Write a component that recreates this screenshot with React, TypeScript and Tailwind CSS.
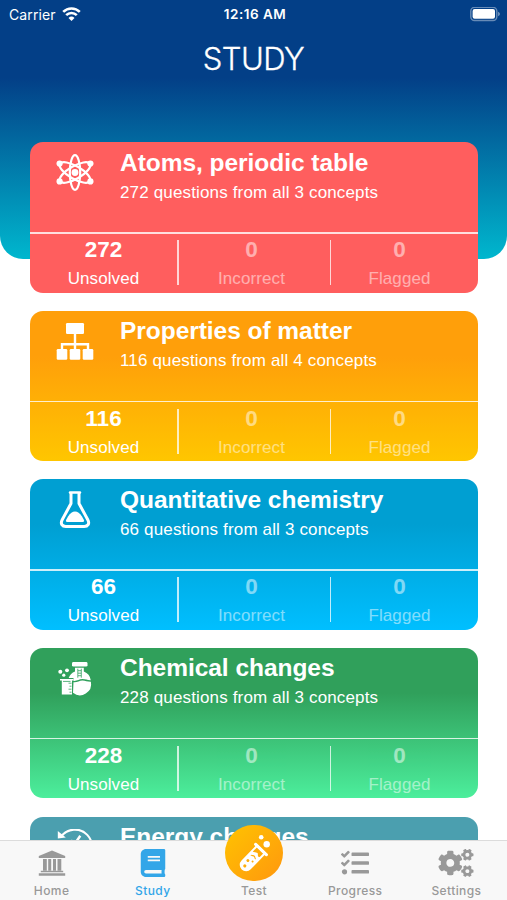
import React from 'react';
import { FaBook, FaCogs, FaTasks } from 'react-icons/fa';

interface Topic {
  title: string;
  questions?: number;
  concepts?: number;
  icon: React.ElementType;
  bgClass: string;
}

interface Tab {
  label: string;
  icon: React.ElementType;
  iconClass: string;
}

const AtomIcon: React.FC = () => (
  <svg width="38" height="38" viewBox="0 0 38 38" fill="none" stroke="currentColor" strokeWidth="2.2">
    <ellipse cx="19" cy="18.5" rx="5.2" ry="17.3" />
    <ellipse cx="19" cy="18.5" rx="6.4" ry="17.3" transform="rotate(60 19 18.5)" />
    <ellipse cx="19" cy="18.5" rx="6.4" ry="17.3" transform="rotate(-60 19 18.5)" />
    <g fill="currentColor" stroke="none">
      <circle cx="19" cy="18.5" r="3.4" />
      <circle cx="3.6" cy="9.6" r="3.1" />
      <circle cx="34.4" cy="9.6" r="3.1" />
      <circle cx="3.6" cy="27.4" r="3.1" />
      <circle cx="34.4" cy="27.4" r="3.1" />
    </g>
  </svg>
);

const SitemapIcon: React.FC = () => (
  <svg width="38" height="38" viewBox="0 0 38 38" fill="currentColor">
    <rect x="10" y="0" width="18" height="11" rx="1.3" />
    <rect x=".7" y="26" width="10.6" height="10.8" rx="1.3" />
    <rect x="13.7" y="26" width="10.6" height="10.8" rx="1.3" />
    <rect x="26.7" y="26" width="10.6" height="10.8" rx="1.3" />
    <path d="M6 26.5v-5.3h26v5.3M19 10.5v16" fill="none" stroke="currentColor" strokeWidth="2.4" />
  </svg>
);

const FlaskIcon: React.FC = () => (
  <svg width="38" height="38" viewBox="0 0 38 38" fill="none" stroke="currentColor" strokeLinejoin="round">
    <path d="M14 1.5h10" strokeWidth="2.4" strokeLinecap="round" />
    <path
      d="M15 2v10.5L6.200 28.800c-2.100 3.900 0 6.700 3.600 6.700h18.400c3.600 0 5.700-2.800 3.600-6.700L23 12.500V2"
      strokeWidth="3"
    />
    <path
      d="M12.200 25.300c2-3.200 4.200-4.800 6.800-4.800s4.800 1.600 6.800 4.800l2 3.500c.7 1.400.2 2.200-1.100 2.200H11.300c-1.300 0-1.800-.8-1.100-2.200z"
      fill="currentColor"
      stroke="none"
    />
  </svg>
);

const BeakersIcon: React.FC = () => (
  <svg width="38" height="38" viewBox="0 0 38 38" fill="currentColor">
    <rect x="16" y="2" width="15.5" height="4.6" rx="1.4" />
    <path d="M19 7.700h8.800v3.900a11.200 11.200 0 0 1 7 8.700c-3.200.2-5.200-1.200-8.300-1.200-3.600 0-5.500 2.200-9 1.800v-2.900h-4.800a11 11 0 0 1 6.300-6.400z" />
    <path d="M17.500 22.300c3.800.4 5.600-1.800 9-1.800 3 0 5 1.400 8.400 1.300a11.200 11.200 0 0 1-17.900 11z" />
    <path d="M4 19h13.500v1.400H16v14.100H5.800V20.400H4z" />
    <circle cx="4.300" cy="11.700" r="2" />
    <circle cx="7.800" cy="15.200" r="1.600" />
    <circle cx="11" cy="10.300" r="1.900" />
    <g fill="none" stroke="#31a15d" strokeWidth=".8">
      <path d="M22 10.700h3.200M22 13.200h3.200M22 15.700h3.200M21.800 8.700v9M25.300 8.700v9" />
      <path d="M12.500 23.200h3M13.500 26.200h2M12.500 29.200h3M13.500 32.200h2M7 21.400h7.500" />
    </g>
  </svg>
);

const ClockIcon: React.FC = () => (
  <svg width="38" height="38" viewBox="0 0 38 38" fill="none" stroke="currentColor" strokeWidth="2.1">
    <path d="M5 7.800A17 17 0 1 1 3 23.600" />
    <path d="M1.800 2v7.400l8-1z" fill="currentColor" stroke="none" />
    <path d="M24.300 6.800L19 14.500l-4-3" strokeWidth="2.5" />
  </svg>
);

const BankIcon: React.FC = () => (
  <svg width="28" height="28" viewBox="0 0 28 28" fill="currentColor">
    <path d="M14 1.500L27.200 7v1.900H.8V7z" />
    <path d="M5 10h3.800v11.800H5zM10.200 10h3v11.800h-3zM15 10h3v11.800h-3zM19.500 10h3.800v11.800h-3.800z" />
    <path d="M2.800 21.800h22.400v1.400H2.800zM.8 24.200h26.400v2.600H.8z" />
  </svg>
);

const TestTubeIcon: React.FC = () => (
  <svg width="38" height="38" viewBox="0 0 38 38" fill="none">
    <g transform="translate(26 15.5) rotate(44)">
      <path d="M-5.400 0v21.400a5.400 5.400 0 0 0 10.800 0V0z" stroke="white" strokeWidth="2" />
      <path d="M-5.400 7c2.500 1 3.500-2.500 5.400-2s2.500 4 5.400.5v15.900a5.400 5.400 0 0 1-10.800 0z" fill="white" />
      <rect x="-9" y="-1.5" width="18" height="3" rx="1.3" fill="white" />
      <path d="M-3.500 11c1.500.2 2-1.700 3.500-1.500s1.500 1.500 2.800 1" stroke="#ffae0a" strokeWidth="1.1" />
      <circle cx="-1.800" cy="17" r="1.5" fill="#ffae0a" />
      <circle cx="2.300" cy="14.500" r="1" fill="#ffae0a" />
      <circle cx="-.3" cy="23" r="1.600" fill="#ffae0a" />
    </g>
    <circle cx="26.200" cy="3.200" r="2.300" fill="white" />
    <circle cx="31.700" cy="10.200" r="3.200" fill="white" />
  </svg>
);

const WifiIcon: React.FC = () => (
  <svg width="19" height="15" viewBox="0 0 19 15" fill="none" stroke="white" strokeWidth="2.6">
    <path d="M1.200 4.900a11.800 11.800 0 0 1 16.600 0" />
    <path d="M4.200 8.200a7.500 7.500 0 0 1 10.600 0" />
    <path d="M9.500 14l-3-3.100a4.300 4.300 0 0 1 6 0z" fill="white" stroke="none" />
  </svg>
);

const BatteryIcon: React.FC = () => (
  <svg width="31" height="15" viewBox="0 0 31 15">
    <rect x=".8" y=".3" width="26" height="13.2" rx="3.8" fill="none" stroke="white" strokeOpacity=".4" strokeWidth="1.4" />
    <rect x="2.6" y="2.1" width="22.4" height="9.6" rx="2" fill="white" />
    <path d="M28.200 4.700c2.100.8 2.100 3.700 0 4.500z" fill="white" fillOpacity=".5" />
  </svg>
);

const TOPICS: Topic[] = [
  {
    title: 'Atoms, periodic table',
    questions: 272,
    concepts: 3,
    icon: AtomIcon,
    bgClass: 'bg-[#ff5e5e]',
  },
  {
    title: 'Properties of matter',
    questions: 116,
    concepts: 4,
    icon: SitemapIcon,
    bgClass: 'bg-[linear-gradient(#ff9f0a_30%,#ffc600)]',
  },
  {
    title: 'Quantitative chemistry',
    questions: 66,
    concepts: 3,
    icon: FlaskIcon,
    bgClass: 'bg-[linear-gradient(#009fd2_30%,#00bfff)]',
  },
  {
    title: 'Chemical changes',
    questions: 228,
    concepts: 3,
    icon: BeakersIcon,
    bgClass: 'bg-[linear-gradient(#30a05b_30%,#4cee9c)]',
  },
  {
    title: 'Energy changes',
    icon: ClockIcon,
    bgClass: 'bg-[#4b9faf]',
  },
];

const TABS: Tab[] = [
  { label: 'Home', icon: BankIcon, iconClass: '' },
  { label: 'Study', icon: FaBook, iconClass: 'w-7 h-7' },
  { label: 'Test', icon: TestTubeIcon, iconClass: '' },
  { label: 'Progress', icon: FaTasks, iconClass: 'w-7 h-7' },
  { label: 'Settings', icon: FaCogs, iconClass: 'w-9 h-7' },
];

const Stat: React.FC<{ value: number; label: string; className: string }> = ({ value, label, className }) => (
  <div className={`text-center ${className}`}>
    <p className="text-[22.5px] leading-[28px] font-bold mt-[4px]">{value}</p>
    <p className="text-[17px] leading-5 mt-[5px] tracking-[0.1px]">{label}</p>
  </div>
);

const TopicCard: React.FC<{ topic: Topic }> = ({ topic }) => (
  <article className={`h-[150.5px] shrink-0 rounded-[13px] text-white overflow-hidden ${topic.bgClass}`}>
    <div className="flex h-[90px]">
      <div className="w-[90px] pt-[12px] flex justify-center">
        <topic.icon />
      </div>
      <div className="whitespace-nowrap">
        <h2 className="text-[24.5px] leading-[30px] font-bold tracking-[-0.04px] mt-[5.5px]">{topic.title}</h2>
        {topic.questions !== undefined && (
          <p className="text-[17px] leading-5 tracking-[0.15px] mt-[5px]">
            {topic.questions} questions from all {topic.concepts} concepts
          </p>
        )}
      </div>
    </div>
    {topic.questions !== undefined && (
      <div className="relative flex">
        <span className="absolute inset-x-0 top-0 h-[1.5px] bg-white/80" />
        <Stat value={topic.questions} label="Unsolved" className="w-[147px]" />
        <span className="w-[1.5px] h-[45px] mt-[8px] bg-white/75" />
        <Stat value={0} label="Incorrect" className="w-[151px] pr-[5px] opacity-50" />
        <span className="w-[1.5px] h-[45px] mt-[8px] bg-white/75" />
        <Stat value={0} label="Flagged" className="w-[137px] opacity-50" />
      </div>
    )}
  </article>
);

const TabBar: React.FC = () => (
  <nav className="h-[60.5px] shrink-0 relative flex pl-px border-t border-[#dcdcdc] bg-[#f8f8f8] font-['Inter',sans-serif]">
    {TABS.map((tab) => (
      <div
        key={tab.label}
        className={`flex-1 flex flex-col items-center justify-end pb-[2px] ${
          tab.label === 'Study' ? 'text-[#33a6e8]' : 'text-[#999999]'
        }`}
      >
        {tab.label === 'Test' ? (
          <span className="w-[58px] h-[58px] -mt-4 mb-0.5 rounded-full bg-linear-to-br from-[#ffc300] to-[#ff970d] flex items-center justify-center">
            <tab.icon />
          </span>
        ) : (
          <span className="h-7 mb-[6px] flex items-center">
            <tab.icon className={tab.iconClass} />
          </span>
        )}
        <span className="text-[12px] leading-[15px] font-medium tracking-[0.4px]">{tab.label}</span>
      </div>
    ))}
  </nav>
);

const App: React.FC = () => (
  <div className="w-[507px] h-[900px] bg-white overflow-hidden flex flex-col font-['Liberation_Sans',Arial,sans-serif]">
    <header className="h-[258.5px] shrink-0 rounded-b-[23px] text-white bg-[linear-gradient(#033f87_30%,#00b7ce)]">
      <div className="h-7 grid grid-cols-3 items-center pl-[9px] pr-[6px] text-[14px] font-['Inter',sans-serif]">
        <div className="flex items-center gap-[6px] tracking-[0.1px]">
          <span>Carrier</span>
          <WifiIcon />
        </div>
        <span className="text-center font-semibold text-[13.5px] tracking-[0.5px]">12:16 AM</span>
        <div className="flex justify-end">
          <BatteryIcon />
        </div>
      </div>
      <h1 className="text-center text-[31px] leading-[38px] font-light tracking-[-0.5px] mt-[12px] [-webkit-text-stroke:0.3px_white] font-['Inter',sans-serif]">
        STUDY
      </h1>
    </header>
    <main className="flex-1 min-h-0 -mt-[116.5px] pl-[30px] pr-[29.5px] flex flex-col gap-[18.17px] overflow-hidden">
      {TOPICS.map((topic) => (
        <TopicCard key={topic.title} topic={topic} />
      ))}
    </main>
    <TabBar />
  </div>
);

export default App;
